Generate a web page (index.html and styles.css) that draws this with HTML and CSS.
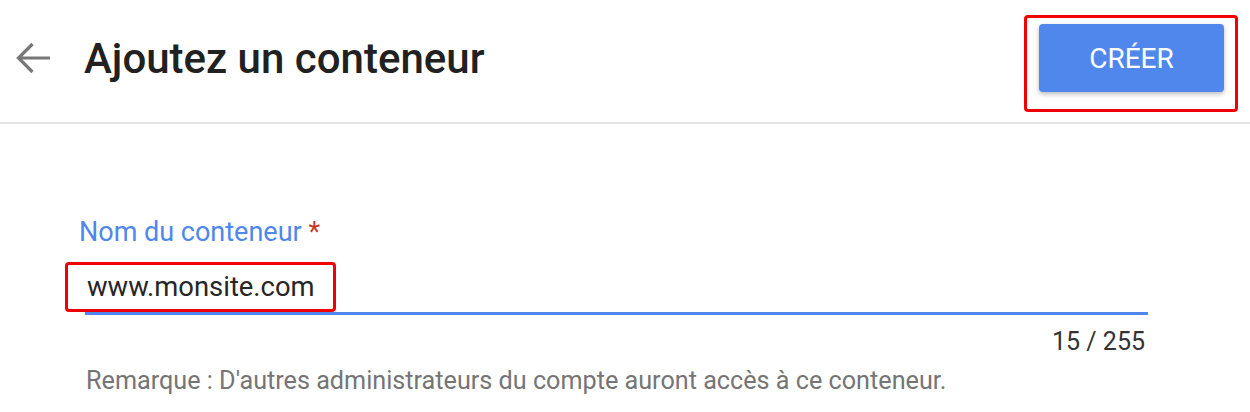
FILE: index.html
```html
<!DOCTYPE html>
<html lang="fr">
<head>
<meta charset="utf-8">
<link rel="stylesheet" href="styles.css">
</head>
<body>
<header class="topbar">
  <div class="title-group">
    <button class="back" aria-label="Retour">
      <svg viewBox="0 0 36 36" width="36" height="36"><path d="M35 17H3.5M17.5 3L3.5 17L17.5 31" fill="none" stroke="#777777" stroke-width="3.2"/></svg>
    </button>
    <h1 class="title">Ajoutez un conteneur</h1>
  </div>
  <div class="highlight highlight-btn">
    <button class="create">CRÉER</button>
  </div>
</header>
<main class="form">
  <label class="label">Nom du conteneur <span class="req">*</span></label>
  <div class="input-line">
    <div class="highlight highlight-input"><span class="value">www.monsite.com</span></div>
  </div>
  <div class="counter">15 / 255</div>
  <p class="note">Remarque : D'autres administrateurs du compte auront accès à ce conteneur.</p>
</main>
</body>
</html>
```

FILE: styles.css
```css
html, body {
  margin: 0;
  padding: 0;
  background: #ffffff;
  font-family: Roboto, "Noto Sans", Arial, sans-serif;
  width: 1250px;
  height: 412px;
  overflow: hidden;
}

.topbar {
  height: 122px;
  border-bottom: 2px solid #e3e3e3;
  display: flex;
  align-items: flex-start;
  justify-content: space-between;
  box-sizing: content-box;
  padding-right: 12px;
}

.title-group {
  display: flex;
  align-items: center;
  padding-top: 37px;
}

.back {
  border: none;
  background: none;
  padding: 0;
  margin-left: 15px;
  width: 36px;
  height: 36px;
  display: flex;
  align-items: center;
  justify-content: center;
}

.title {
  margin: 0 0 0 33px;
  font-size: 42px;
  font-weight: 500;
  color: #212121;
  line-height: 44px;
}

.highlight {
  border: 3px solid #f00000;
  border-radius: 4px;
}

.highlight-btn {
  margin-top: 15px;
  padding: 6px 11px 17px 12px;
}

.create {
  width: 185px;
  height: 68px;
  border: none;
  border-radius: 4px;
  background: #4f87ec;
  color: #ffffff;
  font-family: Roboto, Arial, sans-serif;
  font-size: 28px;
  font-weight: 400;
  box-shadow: 0 2px 5px rgba(0, 0, 0, 0.28);
  display: block;
}

.form {
  padding-left: 79px;
  padding-top: 92px;
  width: 1069px;
}

.label {
  display: block;
  font-size: 27px;
  color: #4f87ec;
  line-height: 32px;
}

.req {
  color: #c5391f;
}

.input-line {
  margin-left: 6px;
  border-bottom: 3px solid #4f87ec;
  height: 64px;
  position: relative;
}

.highlight-input {
  position: absolute;
  left: -20px;
  top: 14px;
  width: 246px;
  height: 44px;
  display: flex;
  align-items: center;
  padding-left: 19px;
  box-sizing: content-box;
}

.value {
  font-size: 27.4px;
  color: #262626;
}

.counter {
  text-align: right;
  padding-right: 3px;
  margin-top: 12px;
  font-size: 25px;
  color: #333333;
  line-height: 30px;
}

.note {
  margin: 9px 0 0 7px;
  font-size: 25.2px;
  color: #757575;
}
```
